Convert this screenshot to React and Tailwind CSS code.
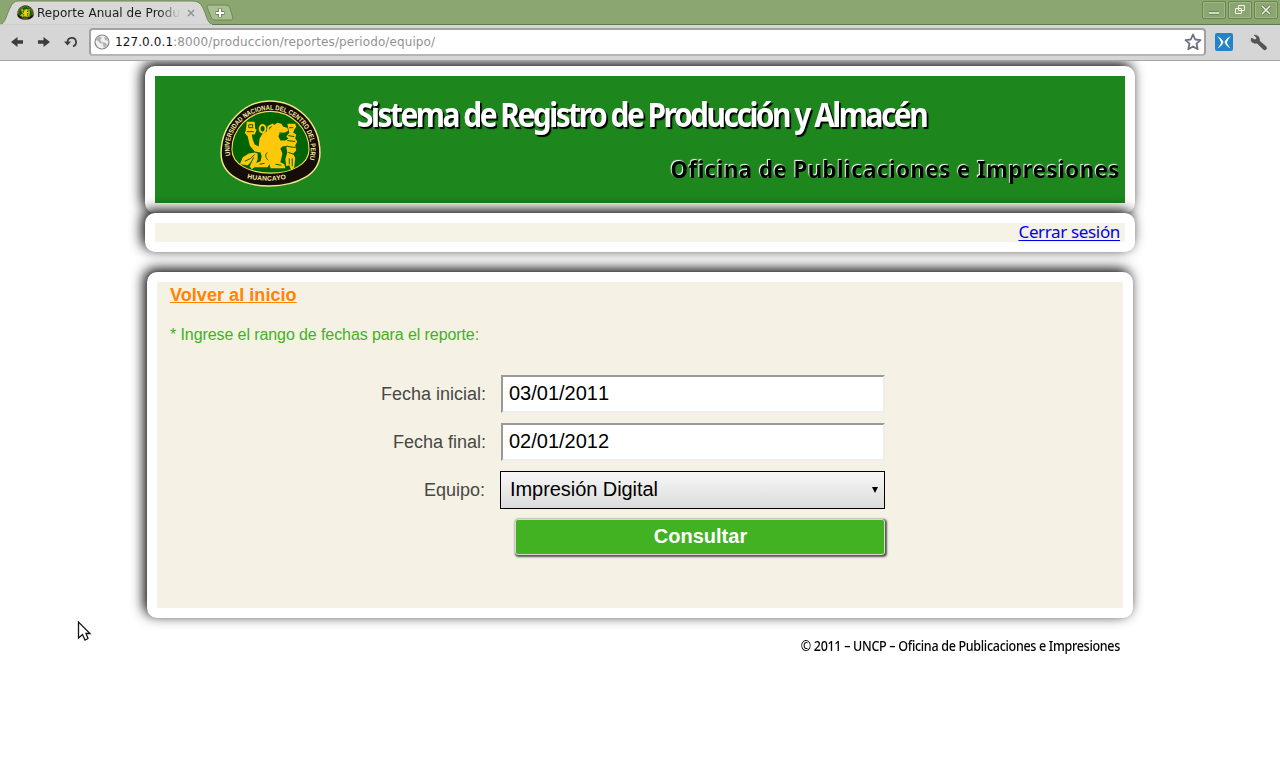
import React from "react";

function Seal({ id, className }) {
  return (
    <svg className={className} viewBox="0 0 102 88" aria-hidden="true">
      <defs>
        <path id={id + "-top"} d="M11 57C4 35 24 10 51 10C78 10 98 35 90 62" />
        <path id={id + "-bottom"} d="M22 77.500Q49 86.500 81 76" />
      </defs>
      <path d="M50 1C77 1 101 22 101 54C101 75 78 87 50 87C24 87 1 76 1 54C1 24 25 1 50 1Z" fill="#160d08" stroke="#f3e88a" strokeWidth="1.5" />
      <path d="M51 11.500C73 11.500 90 30 90 50C90 65 72 74 51 74C30 74 12 65 12 50C12 30 29 11.500 51 11.500Z" fill="#006400" stroke="#f3dc5a" strokeWidth="1.1" />
      <text fill="#f5e9a0" fontSize="7" fontWeight="700" fontFamily="Liberation Sans, sans-serif" textLength="144" lengthAdjust="spacingAndGlyphs">
        <textPath href={"#" + id + "-top"} startOffset="1" textLength="144" lengthAdjust="spacingAndGlyphs">UNIVERSIDAD NACIONAL DEL CENTRO DEL PERU</textPath>
      </text>
      <text fill="#f5e9a0" fontSize="6.8" fontWeight="700" fontFamily="Liberation Sans, sans-serif">
        <textPath href={"#" + id + "-bottom"} startOffset="5.500" textLength="40" lengthAdjust="spacing">HUANCAYO</textPath>
      </text>
      <g fill="#ffc80a">
        <path d="M27 22h8l.5 7 1.500 1-2 5h-3l1 5 2 5 4 2 1-8 3-5 6-3 3-4 3-2 3-2 4 1 2 3 4 1 1 3-4 2-5 1-1 3 2 4 5 0 5-3 3 5-5 3-6 1-2 2 2 5-1 5-1 4 4 2 1 4H51l-1-4-2 3H35l1-4 5-2 1-5-1-4-6-1-5-6-2-9-3-4 1-2z" />
        <path d="M20 65l3-7 6-4 6-1 3 1v6l-3 8-3 2-2-3 2-5-4 4zM68 24h8l1 3-2 3-1 3 3 2-1 4 2 3-2 4 1 5-3 3 2 5-1 9-3 3-2-5-3 1-1-7 2-7-1-5 2-3-2-3 2-3-2-2 3-4z" />
      </g>
      <g fill="none" stroke="#ffc80a" strokeWidth="2">
        <ellipse cx="43" cy="29" rx="3" ry="3.800" />
        <path d="M48 35l1-8 4-2 2 2-4 8" />
      </g>
      <g fill="none" stroke="#006400" strokeWidth="1">
        <path d="M29 25h4v3h-4zM27 32h7M60 33l6 1M48 53c-3 2-2 6 1 8M25 62l6-3 4-4M30 66l4-8M69 36l6 1M68 41l8 1M68 47l8 1M69 53l6 2M70 59v6M73 59v8M40 65l5-1M56 65l6 1M70 28h4" />
      </g>
    </svg>
  );
}

function WindowButton({ children }) {
  return (
    <div className="flex h-[18px] w-[24px] items-center justify-center rounded-[2px] border border-[#6b8553] bg-[#8ba670] shadow-[inset_0_0_0_1px_#a0b787]">
      <svg width="14" height="14" viewBox="0 0 14 14" fill="none" stroke="#52693c" strokeWidth="3">
        {children}
        <g stroke="#f5f6ec" strokeWidth="1.6">{children}</g>
      </svg>
    </div>
  );
}

function Browser() {
  return (
    <div className="font-['DejaVu_Sans',sans-serif]">
      <div className="flex h-[25px] justify-between border-b border-[#62794b] bg-[#8ba670]">
        <div className="flex">
          <div className="relative h-[25px] w-[212px]">
            <svg className="absolute left-0 top-0" width="212" height="25">
              <path d="M0 25C6 22 6 16 10 8Q13 1 18 1H193Q200 1 203 8C207 16 207 23 213 25Z" fill="#d8d8d8" stroke="#718957" />
              <path d="M0 25H212" stroke="#d8d8d8" strokeWidth="1.5" />
            </svg>
            <div className="relative flex h-full items-center pl-[17px]">
              <Seal id="tab-seal" className="h-[17px] w-[17px]" />
              <div className="ml-[3px] w-[143px] overflow-hidden whitespace-nowrap bg-gradient-to-r from-[#1c1c1c] from-85% to-[#d8d8d8] bg-clip-text text-[12px] leading-[18px] tracking-[0.05px] text-transparent">Reporte Anual de Producción</div>
              <svg className="ml-[7px]" width="8" height="8" stroke="#929292" strokeWidth="1.5"><path d="M1 1l6 6M7 1l-6 6" /></svg>
            </div>
          </div>
          <svg className="-ml-[6px] mt-[4px]" width="30" height="18">
            <path d="M2 1H20Q23 1 24 4L27 14Q27 16 25 16H9Q6 16 5 13L1 3Q1 1 2 1Z" fill="#a9be92" stroke="#6f8857" />
            <path d="M14 4.500v9M9.500 9h9" stroke="#6f8857" strokeWidth="4" />
            <path d="M14 5v8M10 9h8" stroke="#fff" strokeWidth="2" />
          </svg>
        </div>
        <div className="flex gap-[2px] pr-[2px] pt-px">
          <WindowButton><path d="M2 10h10" /></WindowButton>
          <WindowButton><path d="M5.500 2.500h6v5h-6zM2.500 5.500h6v5h-6z" strokeWidth="1" /></WindowButton>
          <WindowButton><path d="M3 3l8 8M11 3l-8 8" /></WindowButton>
        </div>
      </div>
      <div className="flex h-[36px] items-center border-b border-[#a4a4a4] bg-[#d6d6d6] pb-px">
        <svg className="ml-[11px]" width="13" height="10" fill="#3c3c3c"><path d="M0 5L6.500 0V3.200H12V6.800H6.500V10Z" /></svg>
        <svg className="ml-[14px]" width="13" height="10" fill="#3c3c3c"><path d="M12 5L5.500 0V3.200H0V6.800H5.500V10Z" /></svg>
        <svg className="ml-[13px]" width="15" height="14" fill="none" stroke="#3c3c3c" strokeWidth="1.8"><path d="M3.500 7A4.300 4.300 0 1 1 9 11.300" /><path d="M0 6.500H7L3.500 10.500Z" fill="#3c3c3c" stroke="none" /></svg>
        <div className="ml-[10px] flex h-[28px] w-[1117px] items-center rounded-[4px] border-2 border-[#a2a2a2] border-b-[#b5b5b5] bg-white pl-[4px] pr-[2px]">
          <svg className="-ml-px" width="16" height="16">
            <circle cx="8" cy="8" r="7" fill="#f1f1f1" stroke="#858585" strokeWidth="1.2" />
            <path d="M2 4l3-2 3 2-2 2 2 2-1 2-3-3-2-1zM8 8l4 1 1 2-3 3-1-3zM10 3l3 1 1 3-3-1z" fill="#b2b2b2" />
          </svg>
          <div className="ml-[5px] flex-1 text-[12px] leading-[18px] tracking-[0.1px] text-[#929292]"><span className="text-[#151515]">127.0.0.1</span>:8000/produccion/reportes/periodo/equipo/</div>
          <svg width="18" height="18" fill="#fff" stroke="#6b7183" strokeWidth="1.8" strokeLinejoin="round"><path d="M9 1.500l2.200 5 5.300.6-4 3.600 1.200 5.500L9 13.500l-4.700 2.700 1.200-5.500-4-3.600 5.300-.6z" /></svg>
        </div>
        <svg className="ml-[9px]" width="18" height="18">
          <rect width="18" height="18" rx="2" fill="#2484c6" />
          <path d="M2 3Q6 4.500 8.400 8.500Q8.300 12 2.500 15.500L6 10.500Q6 7 2 3ZM16 3Q12 4.500 9.600 8.500Q9.700 12 15.500 15.500L12 10.500Q12 7 16 3Z" fill="#fff" />
        </svg>
        <svg className="ml-[17px]" width="18" height="17"><path d="M4 1L7 4 5 6 1.500 4Q0 8 4 9Q6 9.500 7 9L13 15Q15 17 16.500 15Q17 13.500 15.500 12L9.500 7Q10 1 4 1Z" fill="#555" stroke="#414141" strokeWidth=".5" /></svg>
      </div>
    </div>
  );
}

function DateRow({ label, value }) {
  return (
    <div className="flex h-[38px] items-center">
      <label className="w-[329px] text-right text-[18px] text-[#474747]">{label}</label>
      <input className="ml-[15px] h-[38px] w-[384px] border-2 border-b-[#eee] border-l-[#999] border-r-[#eee] border-t-[#999] bg-white px-[6px] pb-[2px] text-[20px] text-black outline-none [font-kerning:none]" defaultValue={value} />
    </div>
  );
}

export default function App() {
  return (
    <div className="h-[775px] overflow-hidden bg-white font-['Liberation_Sans',sans-serif]">
      <Browser />
      <div className="h-[714px] overflow-hidden pt-[5px]">
        <header className="mx-auto flex h-[147px] w-[990px] rounded-[10px] border-10 border-white bg-[#1d861d] font-['Noto_Sans',sans-serif] shadow-[-3px_-3px_13px_#000]">
          <Seal id="header-seal" className="ml-[65px] mt-[24px] h-[87px] w-[101px] shrink-0" />
          <div className="flex-1 pr-[5px]">
            <h1 className="ml-[36px] mt-[15px] w-fit origin-left scale-x-[0.881] whitespace-nowrap text-[34px] font-bold leading-[46px] tracking-[-2.85px] text-white [text-shadow:2px_2px_1px_#000]">Sistema de Registro de Producción y Almacén</h1>
            <h2 className="mt-[15px] origin-right scale-x-[0.92] whitespace-nowrap text-right text-[24px] font-bold leading-[34px] tracking-[0.6px] text-black [text-shadow:-1px_-1px_1px_#fff]">Oficina de Publicaciones e Impresiones</h2>
          </div>
        </header>
        <nav className="mx-auto flex h-[39px] w-[990px] items-center justify-end rounded-[10px] border-10 border-white bg-[#f5f2e6] pr-[5px] font-['Noto_Sans',sans-serif] shadow-[-3px_-3px_13px_#000]">
          <a href="#logout" className="-mt-[2px] text-[17px] leading-[19px] tracking-[-0.35px] text-[#00e] underline decoration-1 underline-offset-2">Cerrar sesión</a>
        </nav>
        <main className="mx-auto mt-[20px] h-[346px] w-[986px] rounded-[10px] border-10 border-white bg-[#f5f2e5] pl-[13px] shadow-[-3px_-3px_13px_#000]">
          <a href="#home" className="block h-[26px] w-fit text-[18px] font-bold leading-[26px] tracking-[0.06px] text-[#ff8400] underline">Volver al inicio</a>
          <p className="mt-[14px] text-[16px] leading-[26px] tracking-[-0.09px] text-[#42b122]">* Ingrese el rango de fechas para el reporte:</p>
          <form className="-ml-[13px] mt-[27px] flex flex-col gap-[10px]">
            <DateRow label="Fecha inicial:" value="03/01/2011" />
            <DateRow label="Fecha final:" value="02/01/2012" />
            <div className="flex h-[38px] items-center">
              <label className="w-[328px] text-right text-[18px] text-[#474747]">Equipo:</label>
              <div className="ml-[15px] flex h-[38px] w-[385px] items-center justify-between border border-black bg-gradient-to-b from-[#f7f7f7] to-[#dcdcdc] pl-[9px] pr-[6px] text-[20px] text-black">
                <span className="pb-[2px] tracking-[-0.06px]">Impresión Digital</span>
                <svg className="-mt-px" width="6" height="6"><path d="M0 0H6L3 6Z" /></svg>
              </div>
            </div>
            <button type="button" className="ml-[358px] h-[36px] w-[370px] rounded-[3px] border border-[#d8d8ce] bg-[#42b122] pb-[3px] pl-px text-[20px] font-bold leading-[30px] text-white shadow-[1px_1px_2px_1px_#555]">Consultar</button>
          </form>
        </main>
        <footer className="mx-auto mt-[17px] w-[986px] origin-[973px_50%] scale-x-[0.895] pr-[13px] text-right font-['Noto_Sans',sans-serif] text-[14px] font-medium leading-[22px] tracking-[-0.35px] text-black">© 2011 – UNCP – Oficina de Publicaciones e Impresiones</footer>
      </div>
      <svg className="absolute left-[77px] top-[620px]" width="16" height="23"><path d="M1.500 2V18L5.500 14.500L8 20L11 18.500L9 13.500H13Z" fill="#fff" stroke="#151515" strokeWidth="1.3" /></svg>
    </div>
  );
}
